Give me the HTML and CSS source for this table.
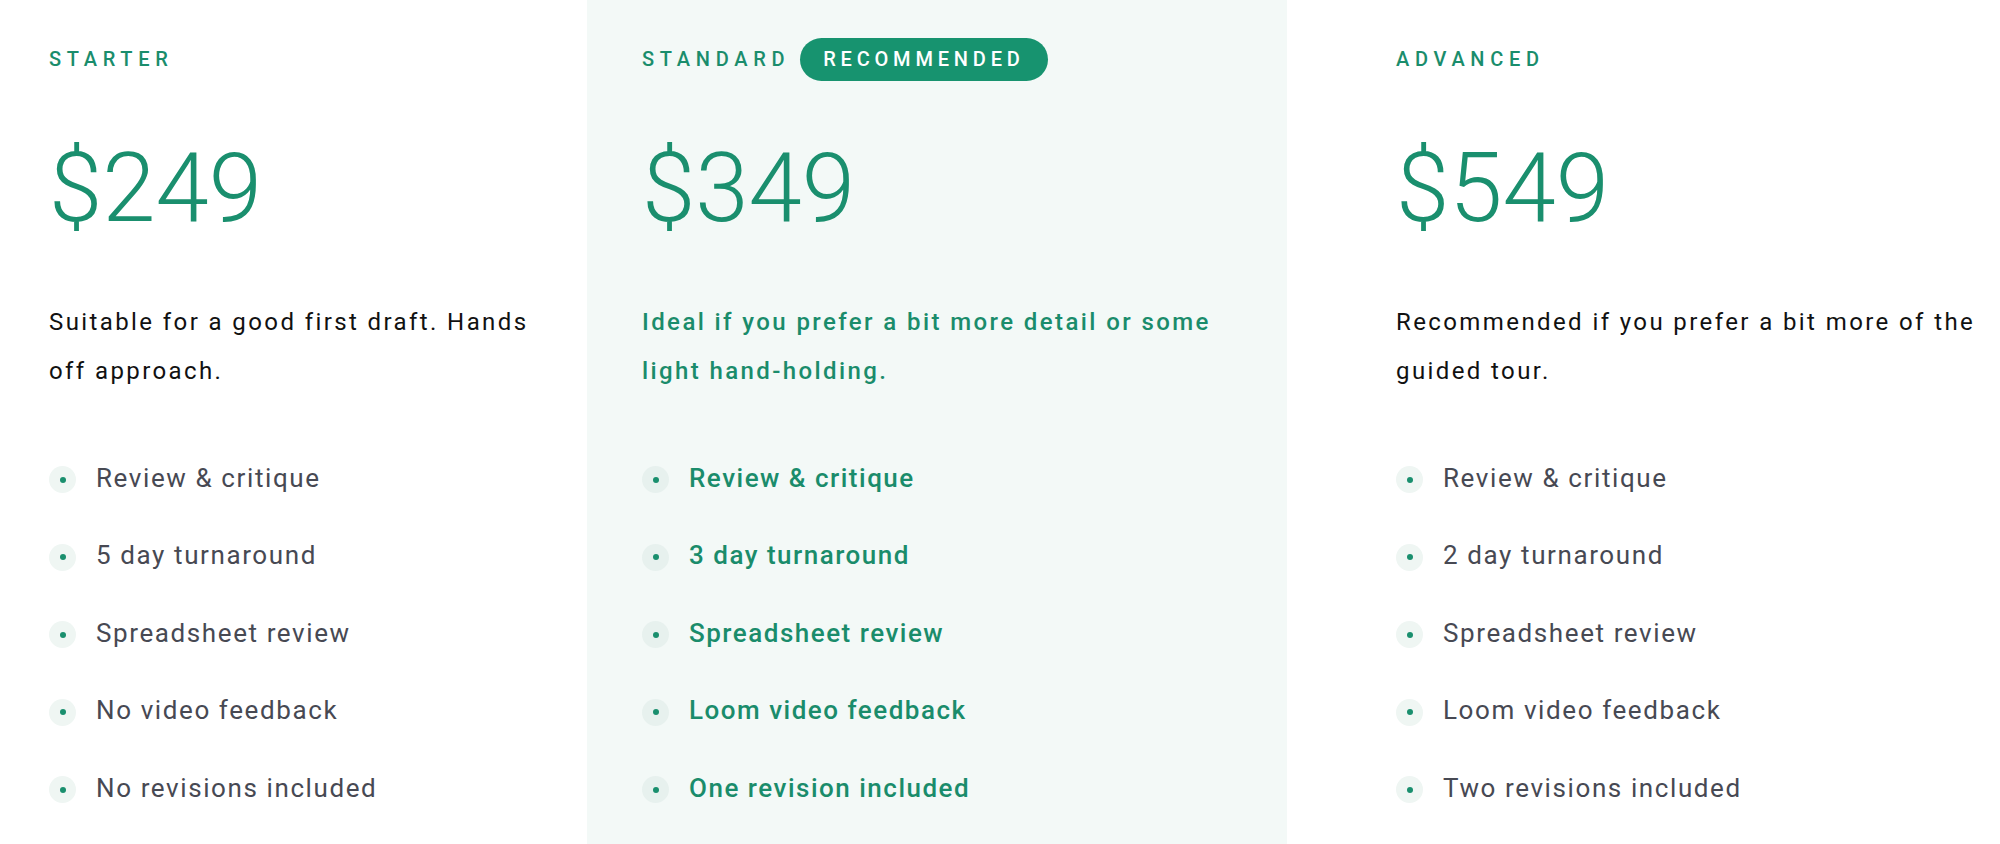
FILE: index.html
```html
<!DOCTYPE html>
<html lang="en">
<head>
<meta charset="utf-8">
<title>Pricing</title>
<link rel="stylesheet" href="styles.css">
</head>
<body>
<main class="plans">
  <section class="plan plan-starter">
    <div class="plan-head"><span class="plan-name">Starter</span></div>
    <div class="plan-price">$249</div>
    <p class="plan-desc">Suitable for a good first draft. Hands off approach.</p>
    <ul class="features">
      <li class="feature"><span class="dot"></span><span class="feature-text">Review &amp; critique</span></li>
      <li class="feature"><span class="dot"></span><span class="feature-text">5 day turnaround</span></li>
      <li class="feature"><span class="dot"></span><span class="feature-text">Spreadsheet review</span></li>
      <li class="feature"><span class="dot"></span><span class="feature-text">No video feedback</span></li>
      <li class="feature"><span class="dot"></span><span class="feature-text">No revisions included</span></li>
    </ul>
  </section>
  <section class="plan plan-standard">
    <div class="plan-head"><span class="plan-name">Standard</span><span class="badge">Recommended</span></div>
    <div class="plan-price">$349</div>
    <p class="plan-desc">Ideal if you prefer a bit more detail or some light hand-holding.</p>
    <ul class="features">
      <li class="feature"><span class="dot"></span><span class="feature-text">Review &amp; critique</span></li>
      <li class="feature"><span class="dot"></span><span class="feature-text">3 day turnaround</span></li>
      <li class="feature"><span class="dot"></span><span class="feature-text">Spreadsheet review</span></li>
      <li class="feature"><span class="dot"></span><span class="feature-text">Loom video feedback</span></li>
      <li class="feature"><span class="dot"></span><span class="feature-text">One revision included</span></li>
    </ul>
  </section>
  <section class="plan plan-advanced">
    <div class="plan-head"><span class="plan-name">Advanced</span></div>
    <div class="plan-price">$549</div>
    <p class="plan-desc">Recommended if you prefer a bit more of the guided tour.</p>
    <ul class="features">
      <li class="feature"><span class="dot"></span><span class="feature-text">Review &amp; critique</span></li>
      <li class="feature"><span class="dot"></span><span class="feature-text">2 day turnaround</span></li>
      <li class="feature"><span class="dot"></span><span class="feature-text">Spreadsheet review</span></li>
      <li class="feature"><span class="dot"></span><span class="feature-text">Loom video feedback</span></li>
      <li class="feature"><span class="dot"></span><span class="feature-text">Two revisions included</span></li>
    </ul>
  </section>
</main>
</body>
</html>
```

FILE: styles.css
```css
* { box-sizing: border-box; }

html, body {
  margin: 0;
  padding: 0;
  background: #ffffff;
}

body {
  font-family: Roboto, "Liberation Sans", sans-serif;
  color: #111111;
  width: 2000px;
  height: 844px;
  overflow: hidden;
}

.plans {
  display: flex;
  height: 844px;
}

.plan {
  padding-top: 38px;
}

.plan-starter {
  width: 587px;
  padding-left: 49px;
  padding-right: 48px;
}

.plan-standard {
  width: 700px;
  padding-left: 55px;
  padding-right: 55px;
  background: #f3f9f7;
}

.plan-advanced {
  flex: 1;
  padding-left: 109px;
}

.plan-head {
  display: flex;
  align-items: center;
  height: 42px;
}

.plan-name {
  font-size: 20px;
  font-weight: 500;
  letter-spacing: 5.7px;
  text-transform: uppercase;
  color: #1a8d6c;
}

.badge {
  display: inline-flex;
  align-items: center;
  height: 43px;
  margin-left: 10px;
  padding: 0 23px;
  border-radius: 22px;
  background: #17936f;
  color: #ffffff;
  font-size: 20px;
  font-weight: 500;
  letter-spacing: 4.8px;
  text-transform: uppercase;
}

.plan-price {
  margin-top: 60px;
  font-size: 96px;
  font-weight: 300;
  line-height: 96px;
  color: #1a8f6e;
}

.plan-desc {
  margin: 62px 0 0;
  font-size: 24px;
  line-height: 49px;
  letter-spacing: 2.4px;
  color: #111111;
}

.plan-standard .plan-desc {
  color: #1a8c6b;
  font-weight: 500;
  letter-spacing: 2.4px;
}

.features {
  list-style: none;
  margin: 70px 0 0;
  padding: 0;
  display: flex;
  flex-direction: column;
  gap: 50.6px;
}

.feature {
  display: flex;
  align-items: center;
  height: 27px;
}

.dot {
  flex: none;
  width: 27px;
  height: 27px;
  border-radius: 50%;
  background: #eff6f3;
  display: flex;
  align-items: center;
  justify-content: center;
  margin-right: 20px;
}

.dot::after {
  content: "";
  width: 6px;
  height: 6px;
  border-radius: 50%;
  background: #1a8f6e;
}

.plan-standard .dot {
  background: #e7f1ee;
}

.feature-text {
  font-size: 26px;
  line-height: 26px;
  letter-spacing: 1.6px;
  color: #474953;
  white-space: nowrap;
  margin-bottom: 4px;
}

.plan-standard .feature-text {
  color: #1a8c6b;
  font-weight: 500;
  letter-spacing: 1.5px;
}
```
